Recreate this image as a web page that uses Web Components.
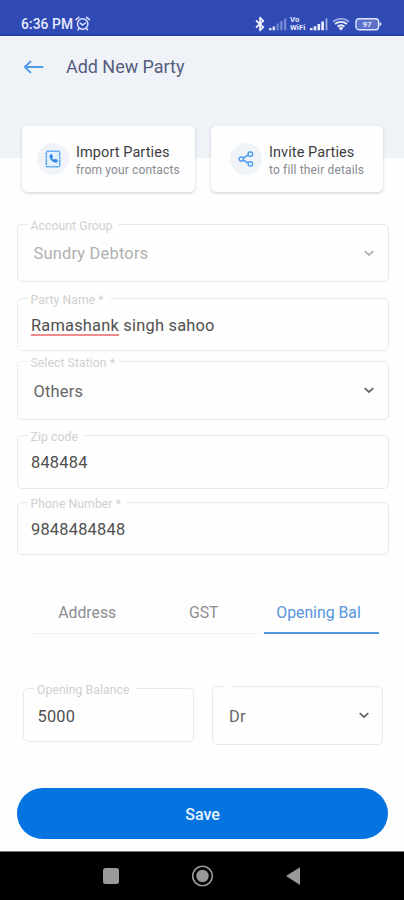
<!DOCTYPE html>
<html lang="en">
<head>
<meta charset="utf-8">
<title>Add New Party</title>
<style>
body { margin: 0; background: #fefefe; font-family: Roboto, "Liberation Sans", sans-serif; }
</style>
</head>
<body>
<party-app></party-app>
<script>
const define = (name, html) => {
  const t = document.createElement('template');
  t.innerHTML = html;
  customElements.define(name, class extends HTMLElement {
    constructor() {
      super();
      this.attachShadow({ mode: 'open' }).append(t.content.cloneNode(true));
    }
  });
};

define('status-bar', `
<style>
:host { display: flex; box-sizing: border-box; height: 36px; padding: 14px 21px 0 21px; align-items: flex-start; background: #2f49b5; border-bottom: 2px solid #2540a4; color: #e6eaff; }
.time { font-size: 13.8px; line-height: 21px; font-weight: 500; letter-spacing: .1px; white-space: nowrap; width: 54px; }
svg { display: block; flex: none; }
.space { flex: 1; }
.vo { font-size: 7.8px; line-height: 8px; font-weight: 700; width: 17px; margin: 2px 3px 0 2px; white-space: nowrap; }
.vo span { display: block; }
.bat { position: relative; width: 28px; height: 20px; }
.bat span { position: absolute; left: 0; width: 24px; top: 6px; text-align: center; font-size: 8px; line-height: 9px; font-weight: 700; }
</style>
<span class="time">6:36 PM</span>
<svg width="16" height="20" viewBox="0 0 16 20" fill="none" stroke="#dfe5ff" stroke-width="1.5" stroke-linecap="round"><circle cx="7.7" cy="10" r="5.2"/><path d="M1 5.6 3.8 3.3M14.4 5.6 11.6 3.3M5.3 9.2 7.5 11 10.4 9M4 14.7 3 15.8M11.5 14.7l1 1.1"/></svg>
<span class="space"></span>
<svg width="12" height="20" viewBox="1 0 12 20" fill="none" stroke="#eef1ff" stroke-width="1.8" stroke-linejoin="round"><path d="M2 6.5 9.3 13.2 6 16.3V3.7L9.3 6.8 2 13.5"/></svg>
<svg width="21" height="20" viewBox="0 0 21 20" fill="#dce3ff"><path d="M2 14h2.5v2.300H2zM5.600 12.600h2.500v3.700H5.600z"/><path opacity=".42" d="M9.600 9.500h2.200v6.800H9.600zM13.300 7h2.200v9.300h-2.200zM17 4.500h2.200v11.800H17z"/></svg>
<span class="vo"><span>Vo</span><span>WiFi</span></span>
<svg width="21" height="20" viewBox="0 0 21 20" fill="#eef1ff"><path d="M0 14h2.600v2.300H0zM3.700 12.300h2.600v4H3.700zM7.500 10h2.600v6.300H7.500zM11.300 7.500h2.600v8.800h-2.600z"/><path opacity=".55" d="M15.500 4.500h2v11.800h-2z"/></svg>
<svg width="24" height="20" viewBox="0 0 24 20" fill="none"><path d="M1.800 7.800Q10 1.700 18.200 7.800" stroke="#93a2e6" stroke-width="2"/><path d="M4 10Q10 5.700 16 10M6.500 12.600Q10 10 13.500 12.600" stroke="#eef1ff" stroke-width="1.900"/><path d="m7.500 13.700 2.500 2.700 2.500-2.700q-2.500-1.500-5 0z" fill="#fff"/></svg>
<span class="bat"><svg width="28" height="20" viewBox="0 0 28 20"><rect x="1" y="4.700" width="22.500" height="11" rx="2.800" fill="#5b70c9" stroke="#dfe5ff" stroke-width="1.400"/><path d="M24.500 7.500 26.800 10l-2.300 2.700z" fill="#dfe5ff"/></svg><span>97</span></span>
`);

define('page-header', `
<style>
:host { display: flex; height: 61px; padding-left: 23px; align-items: center; }
svg { display: block; margin-right: 22px; }
h1 { margin: 0; font-size: 18px; line-height: 24px; font-weight: 400; color: #565d80; white-space: nowrap; letter-spacing: -.04px; }
</style>
<svg width="21" height="18" viewBox="0 0 21 18" fill="none" stroke="#4f9be8" stroke-width="1.800" stroke-linecap="round" stroke-linejoin="round"><path d="M19.500 9H1.800M7.500 3.500 1.800 9l5.700 5.500"/></svg>
<h1><slot></slot></h1>
`);

define('action-card', `
<style>
:host { display: flex; box-sizing: border-box; height: 66px; padding: 0 0 0 var(--inset, 15px); align-items: center; background: #fefefe; border-radius: 5px; box-shadow: 0 1px 3px rgba(50,65,90,.25); }
.disc { display: grid; place-items: center; width: 32px; height: 32px; border-radius: 50%; background: #f0f4f9; margin-right: 7px; flex: none; }
.title { font-size: 14.500px; line-height: 18px; color: #3d3d42; white-space: nowrap; letter-spacing: .08px; }
.sub { font-size: 12px; line-height: 17px; color: #8a8a90; white-space: nowrap; letter-spacing: .15px; }
.copy { padding-top: 5px; }
</style>
<span class="disc"><slot name="icon"></slot></span>
<div class="copy"><div class="title"><slot></slot></div><div class="sub"><slot name="sub"></slot></div></div>
`);

customElements.define('form-field', class extends HTMLElement {
  connectedCallback() {
    const select = this.hasAttribute('select');
    const root = this.attachShadow({ mode: 'open' });
    root.innerHTML = `
<style>
:host { display: flex; position: relative; box-sizing: border-box; height: var(--h, 53px); align-items: center; border: 1.500px solid #e9e9e9; border-radius: 5px; background: #fefefe; padding: 2px 12.500px 0 13.500px; font-size: 16.400px; color: #505050; letter-spacing: .22px; }
:host([select]) { padding-left: 16px; color: #666; }
:host([disabled]) { color: #b0b0b0; }
.label { position: absolute; left: 10px; top: -8px; height: 16px; padding: 0 6px 0 3px; background: #fefefe; font-size: 12.200px; line-height: 18px; color: #d0d0d0; white-space: nowrap; letter-spacing: .08px; }
.value { flex: 1; line-height: 22px; white-space: nowrap; }
svg { display: block; margin-top: -3px; }
</style>
<span class="label"></span><span class="value"><slot></slot></span>
${select ? '<svg width="12" height="10" viewBox="0 0 12 10" fill="none" stroke="currentColor" stroke-width="1.700"><path d="M1.700 3.200 6 7 10.300 3.200"/></svg>' : ''}`;
    root.querySelector('.label').textContent = this.getAttribute('label') || '';
  }
});

define('tab-item', `
<style>
:host { display: block; flex: 1; box-sizing: border-box; height: 43px; line-height: 44px; text-align: center; font-size: 15.800px; color: #8d8d91; border-bottom: 1px solid #f3f3f3; white-space: nowrap; }
:host([active]) { flex: 0 0 115px; margin-left: 2px; padding-right: 6px; color: #5595dd; border-bottom: 2px solid #5595dd; }
</style><slot></slot>`);

define('save-button', `
<style>
:host { display: block; }
button { display: block; width: 100%; height: 51px; padding: 2px 0 0; border: 0; border-radius: 26px; background: #0573e0; color: #e9f4ff; font: 500 16px Roboto, sans-serif; }
</style><button><slot></slot></button>`);

define('nav-bar', `
<style>
:host { display: flex; box-sizing: border-box; height: 49px; border-top: 1px solid #777; background: #000; justify-content: center; align-items: center; gap: 67px; }
svg { display: block; }
</style>
<svg width="24" height="24" viewBox="0 0 24 24"><rect x="4" y="4" width="16" height="16" rx="2.500" fill="#999"/></svg>
<svg width="24" height="24" viewBox="0 0 24 24"><circle cx="12.500" cy="12" r="9.800" fill="none" stroke="#999" stroke-width="1.600"/><circle cx="12.500" cy="12" r="6.200" fill="#999"/></svg>
<svg width="24" height="24" viewBox="0 0 24 24"><path d="M5 12 19 3.300v17.700z" fill="#999"/></svg>
`);

define('party-app', `
<style>
:host { display: flex; flex-direction: column; width: 404px; height: 900px; background: #fefefe; overflow: hidden; }
.top { height: 155px; box-sizing: border-box; background: linear-gradient(#eff3f8 122px, #fefefe 122px); }
.cards { display: grid; grid-template-columns: 1fr 1fr; gap: 16px; padding: 29px 21px 0 22px; }
.fields { display: flex; flex-direction: column; padding: 33px 15.500px 0 16.500px; }
.tabs { display: flex; padding: 36px 25px 0 29px; align-items: flex-start; }
.row { display: grid; grid-template-columns: 171px 171px; gap: 18px; padding: 52px 21px 0 23px; align-items: start; }
save-button { margin: 43px 16px 0 17px; }
nav-bar { margin-top: auto; }
u { text-decoration: underline 2px #ee8c8c; text-underline-offset: 3px; text-decoration-skip-ink: none; }
svg { display: block; }
</style>
<status-bar></status-bar>
<div class="top">
  <page-header>Add New Party</page-header>
  <div class="cards">
    <action-card>
      <svg slot="icon" width="16" height="18" viewBox="0 0 16 18"><rect x="1.300" y="1.300" width="13.400" height="15.400" rx="1" fill="#e3f0fd" stroke="#5ba8f3" stroke-width="1.500" stroke-dasharray="3 .4"/><path d="M5.200 4.800 7 4.600l.7 2.500-1 .8q.8 1.500 2.400 2.200l1-1 2.300.9-.3 2q-1 .8-3-.1-4-2-4.400-5.500z" fill="#2c87e6" stroke="#2c87e6" stroke-width=".5"/></svg>
      Import Parties<span slot="sub">from your contacts</span>
    </action-card>
    <action-card style="--inset:19.5px">
      <svg slot="icon" width="16" height="18" viewBox="0 0 16 18" fill="none" stroke="#4f9fec" stroke-width="1.500"><circle cx="3.300" cy="9" r="2.100"/><rect x="10.200" y="2" width="4.300" height="4.300" rx="1.400"/><rect x="10.200" y="11.700" width="4.300" height="4.300" rx="1.400"/><path d="M5.200 8 10.200 4.800M5.200 10l5 3.200"/></svg>
      Invite Parties<span slot="sub">to fill their details</span>
    </action-card>
  </div>
</div>
<div class="fields">
  <form-field label="Account Group" select disabled style="--h:58px">Sundry Debtors</form-field>
  <form-field label="Party Name *" style="margin-top:16px"><u>Ramashank</u> singh sahoo</form-field>
  <form-field label="Select Station *" select style="--h:59px;margin-top:10px">Others</form-field>
  <form-field label="Zip code" style="--h:54px;margin-top:15px">848484</form-field>
  <form-field label="Phone Number *" style="margin-top:13px">9848484848</form-field>
</div>
<div class="tabs"><tab-item>Address</tab-item><tab-item>GST</tab-item><tab-item active>Opening Bal</tab-item></div>
<div class="row">
  <form-field label="Opening Balance" style="--h:54px;margin-top:2px;padding-top:3px">5000</form-field>
  <form-field label="" select style="--h:59px">Dr</form-field>
</div>
<save-button>Save</save-button>
<nav-bar></nav-bar>
`);
</script>
</body>
</html>
